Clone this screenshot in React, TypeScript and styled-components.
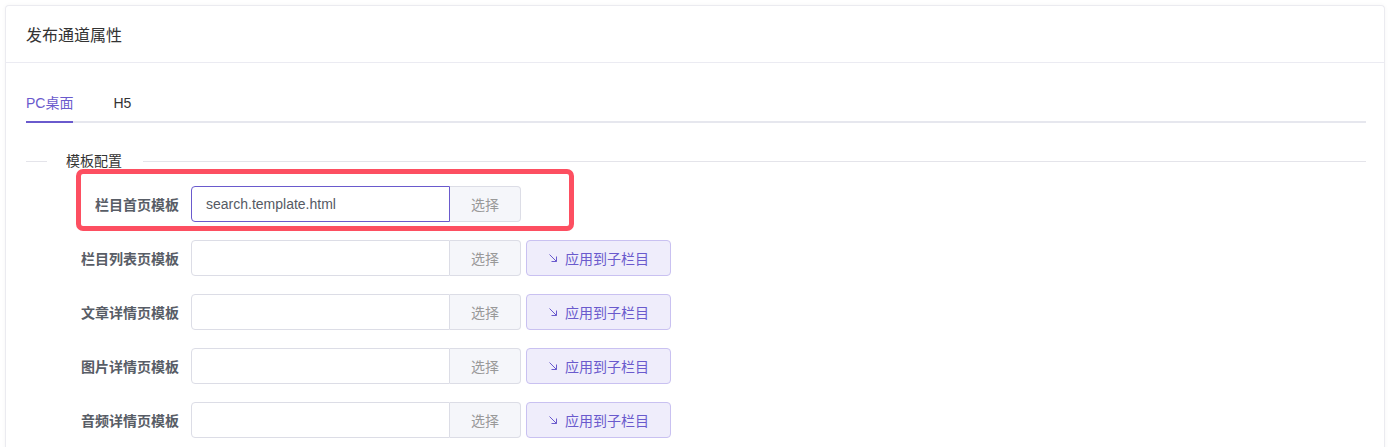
import { useState } from "react";
import styled, { createGlobalStyle } from "styled-components";

const GlobalStyle = createGlobalStyle`
  html, body {
    margin: 0;
    padding: 0;
    overflow: hidden;
    background: #fff;
    font-family: "Liberation Sans", "Noto Sans CJK SC", sans-serif;
  }
`;

const purple = "#6a5acd";

const Page = styled.div`
  box-sizing: border-box;
  height: 100vh;
  overflow: hidden;
  padding: 5px 3px 0 5px;
`;

const Card = styled.div`
  background: #fff;
  border: 1px solid #ebebf0;
  border-bottom: none;
  border-radius: 4px 4px 0 0;
  box-shadow: 0 0 4px rgba(0, 0, 0, 0.04);
  height: calc(100% + 4px);
  box-sizing: border-box;
`;

const CardHeader = styled.div`
  height: 56px;
  padding: 0 20px;
  display: flex;
  align-items: center;
  border-bottom: 1px solid #ebebf2;
`;

const CardTitle = styled.h3`
  margin: 0;
  font-size: 16px;
  font-weight: normal;
  color: #333;
`;

const CardBody = styled.div`
  padding: 29px 18px 0 20px;
`;

const TabBar = styled.div`
  display: flex;
  gap: 40px;
  border-bottom: 2px solid #e6e7ee;
`;

const Tab = styled.div<{ $active?: boolean }>`
  font-size: 14px;
  line-height: 22px;
  padding-bottom: 7px;
  margin-bottom: -2px;
  cursor: pointer;
  color: ${(p) => (p.$active ? purple : "#333")};
  border-bottom: 2px solid ${(p) => (p.$active ? purple : "transparent")};
`;

const Divider = styled.div`
  display: flex;
  align-items: center;
  margin-top: 28px;
  font-size: 14px;
  line-height: 20px;
  color: #333;

  &::before {
    content: "";
    width: 21px;
    border-top: 1px solid #e4e4ea;
    margin-right: 19px;
  }
  &::after {
    content: "";
    flex: 1;
    border-top: 1px solid #e4e4ea;
    margin-left: 21px;
  }
`;

const Form = styled.div`
  display: flex;
  flex-direction: column;
  gap: 18px;
  margin-top: 15px;
`;

const FormRow = styled.div`
  position: relative;
  display: flex;
  align-items: center;
  height: 36px;
`;

const Label = styled.label`
  width: 153px;
  padding-right: 12px;
  text-align: right;
  font-size: 14px;
  font-weight: bold;
  color: #585d66;
`;

const InputGroup = styled.div`
  display: flex;
  height: 36px;
`;

const TextInput = styled.input<{ $focused?: boolean }>`
  box-sizing: border-box;
  width: 259px;
  height: 36px;
  padding: 0 14px;
  font-family: inherit;
  font-size: 14px;
  color: #555a64;
  border: 1px solid ${(p) => (p.$focused ? purple : "#dcdde6")};
  border-radius: 4px 0 0 4px;
  outline: none;
`;

const SelectButton = styled.button`
  box-sizing: border-box;
  width: 71px;
  height: 36px;
  font-family: inherit;
  font-size: 14px;
  color: #999;
  background: #f5f6fa;
  border: 1px solid #dcdde6;
  border-left: none;
  border-radius: 0 4px 4px 0;
  cursor: pointer;
`;

const ApplyButton = styled.button`
  box-sizing: border-box;
  margin-left: 5px;
  width: 145px;
  height: 36px;
  display: flex;
  align-items: center;
  justify-content: center;
  gap: 7px;
  font-family: inherit;
  font-size: 14px;
  color: ${purple};
  background: #efedfb;
  border: 1px solid #c9c1f1;
  border-radius: 4px;
  cursor: pointer;
`;

// the red annotation box drawn over the first row
const Highlight = styled.div`
  position: absolute;
  left: 50px;
  top: -17px;
  width: 498px;
  height: 62px;
  box-sizing: border-box;
  border: 5px solid #fd4f61;
  border-radius: 7px;
  pointer-events: none;
`;

const ArrowIcon = () => (
  <svg width="10" height="10" viewBox="0 0 10 10" fill="none">
    <path d="M1.5 1.5L8.5 8.5M8.5 3.5V8.5H3.5" stroke="currentColor" strokeWidth="1" />
  </svg>
);

const rows = [
  { label: "栏目首页模板", value: "search.template.html", apply: false },
  { label: "栏目列表页模板", value: "", apply: true },
  { label: "文章详情页模板", value: "", apply: true },
  { label: "图片详情页模板", value: "", apply: true },
  { label: "音频详情页模板", value: "", apply: true },
];

function App() {
  const [tab, setTab] = useState("pc");
  return (
    <Page>
      <GlobalStyle />
      <Card>
        <CardHeader>
          <CardTitle>发布通道属性</CardTitle>
        </CardHeader>
        <CardBody>
          <TabBar>
            <Tab $active={tab === "pc"} onClick={() => setTab("pc")}>
              PC桌面
            </Tab>
            <Tab $active={tab === "h5"} onClick={() => setTab("h5")}>
              H5
            </Tab>
          </TabBar>
          <Divider>模板配置</Divider>
          <Form>
            {rows.map((r, i) => (
              <FormRow key={r.label}>
                {i === 0 && <Highlight />}
                <Label>{r.label}</Label>
                <InputGroup>
                  <TextInput $focused={i === 0} defaultValue={r.value} />
                  <SelectButton>选择</SelectButton>
                </InputGroup>
                {r.apply && (
                  <ApplyButton>
                    <ArrowIcon />
                    应用到子栏目
                  </ApplyButton>
                )}
              </FormRow>
            ))}
          </Form>
        </CardBody>
      </Card>
    </Page>
  );
}

export default App;
